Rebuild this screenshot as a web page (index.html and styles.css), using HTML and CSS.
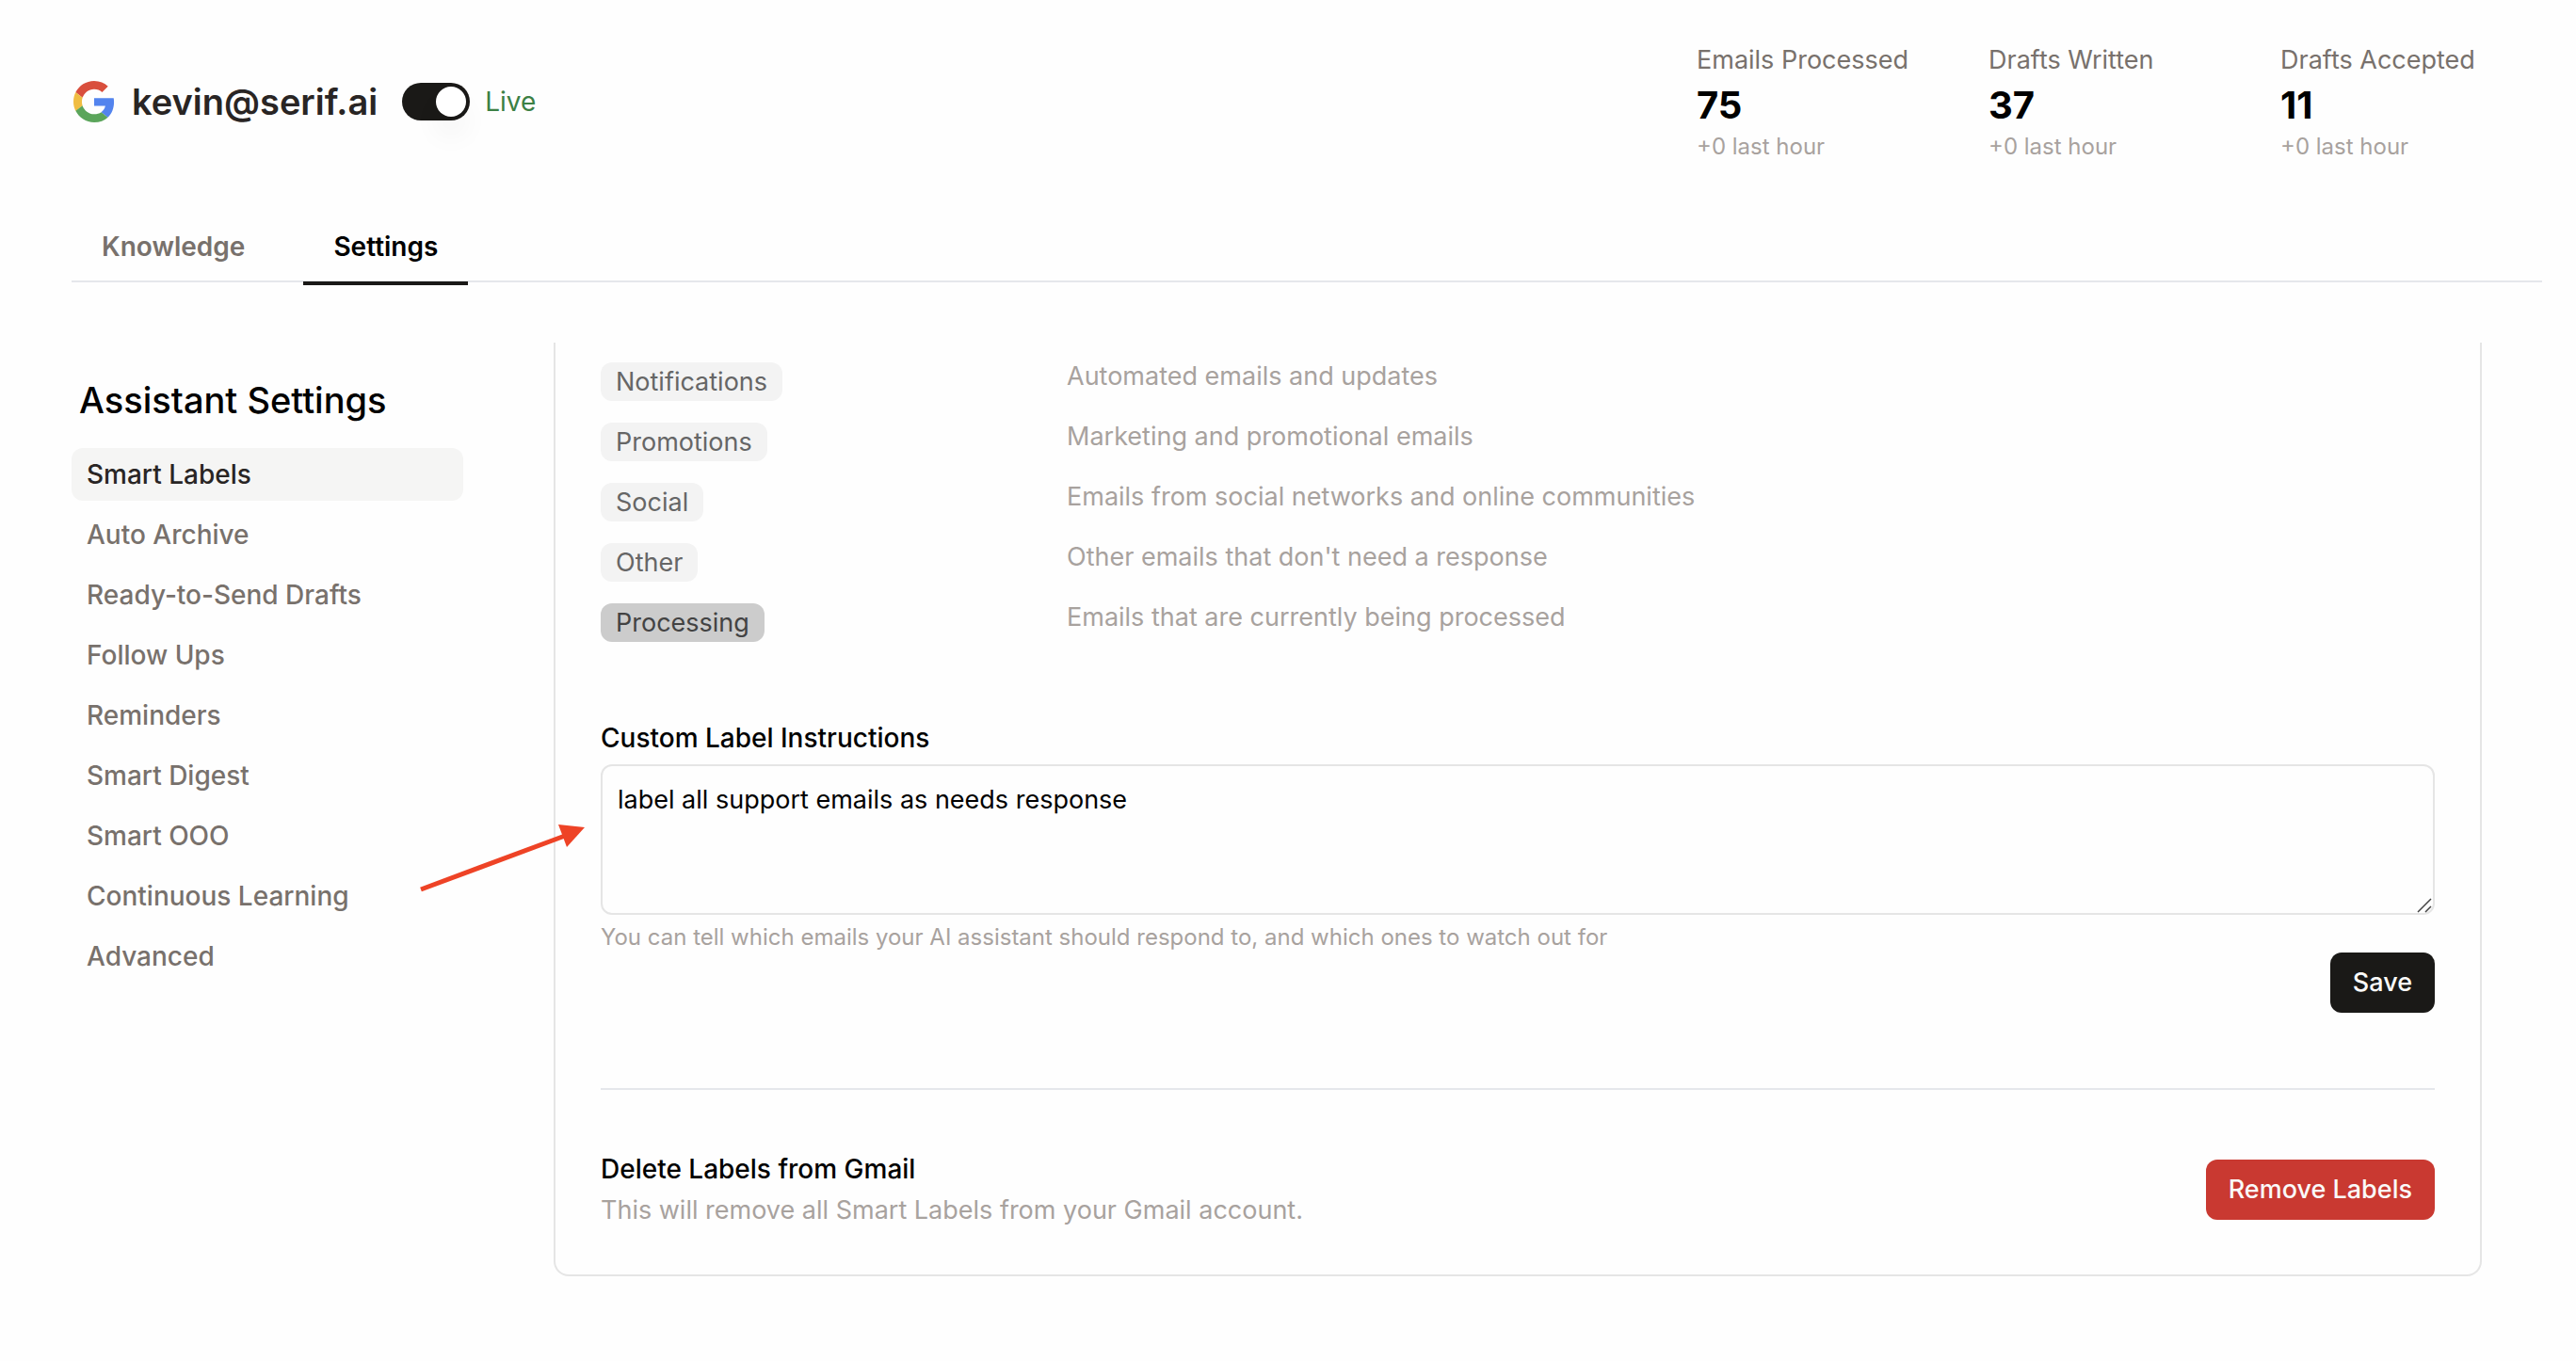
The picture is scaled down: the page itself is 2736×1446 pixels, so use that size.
FILE: index.html
```html
<!DOCTYPE html>
<html lang="en">
<head>
<meta charset="utf-8">
<meta name="viewport" content="width=device-width, initial-scale=1">
<title>Assistant Settings</title>
<link rel="stylesheet" href="styles.css">
</head>
<body>
<header class="header">
  <div class="account">
    <svg class="google" viewBox="0 0 48 48" preserveAspectRatio="none" aria-hidden="true">
      <path fill="#d94f3d" d="M24 9.500c3.540 0 6.710 1.220 9.210 3.600l6.850-6.850C35.900 2.380 30.470 0 24 0 14.620 0 6.510 5.380 2.560 13.220l7.980 6.190C12.430 13.720 17.740 9.500 24 9.500z"/>
      <path fill="#5384ee" d="M46.980 24.550c0-1.570-.15-3.090-.38-4.550H24v9.020h12.940c-.58 2.960-2.260 5.480-4.780 7.180l7.730 6c4.510-4.180 7.090-10.360 7.090-17.650z"/>
      <path fill="#f0bd42" d="M10.530 28.590c-.48-1.450-.76-2.990-.76-4.590s.27-3.140.76-4.590l-7.980-6.190C.920 16.460 0 20.120 0 24c0 3.880.92 7.540 2.560 10.780l7.970-6.190z"/>
      <path fill="#5ba55b" d="M24 48c6.480 0 11.930-2.130 15.890-5.810l-7.730-6c-2.150 1.450-4.920 2.300-8.160 2.300-6.260 0-11.570-4.220-13.470-9.910l-7.980 6.190C6.510 42.620 14.620 48 24 48z"/>
    </svg>
    <h1 class="email">kevin@serif.ai</h1>
    <label class="live">
      <input class="switch" type="checkbox" role="switch" checked>
      <span>Live</span>
    </label>
  </div>
  <dl class="stats">
    <div><dt>Emails Processed</dt><dd class="count">75</dd><dd class="delta">+0 last hour</dd></div>
    <div><dt>Drafts Written</dt><dd class="count">37</dd><dd class="delta">+0 last hour</dd></div>
    <div><dt>Drafts Accepted</dt><dd class="count">11</dd><dd class="delta">+0 last hour</dd></div>
  </dl>
</header>

<nav class="tabs" aria-label="Sections">
  <a class="tab" href="#knowledge">Knowledge</a>
  <a class="tab tab-active" href="#settings" aria-current="page">Settings</a>
</nav>

<div class="layout">
  <aside class="sidebar">
    <h2 class="sidebar-title">Assistant Settings</h2>
    <nav class="menu" aria-label="Assistant settings">
      <a class="menu-active" href="#smart-labels" aria-current="page">Smart Labels</a>
      <a href="#auto-archive">Auto Archive</a>
      <a href="#drafts">Ready-to-Send Drafts</a>
      <a href="#follow-ups">Follow Ups</a>
      <a href="#reminders">Reminders</a>
      <a href="#digest">Smart Digest</a>
      <a href="#ooo">Smart OOO</a>
      <a href="#learning">Continuous Learning</a>
      <a href="#advanced">Advanced</a>
    </nav>
  </aside>

  <main class="card">
    <dl class="labels">
      <div><dt><span class="chip">Notifications</span></dt><dd>Automated emails and updates</dd></div>
      <div><dt><span class="chip">Promotions</span></dt><dd>Marketing and promotional emails</dd></div>
      <div><dt><span class="chip">Social</span></dt><dd>Emails from social networks and online communities</dd></div>
      <div><dt><span class="chip">Other</span></dt><dd>Other emails that don't need a response</dd></div>
      <div><dt><span class="chip chip-dark">Processing</span></dt><dd>Emails that are currently being processed</dd></div>
    </dl>

    <form class="instructions">
      <label class="field-title" for="instructions">Custom Label Instructions</label>
      <div class="field">
        <textarea id="instructions" aria-describedby="instructions-help">label all support emails as needs response</textarea>
        <svg class="grip" viewBox="0 0 16 16" aria-hidden="true"><path d="M1 15 15 1M9 15l6-6"/></svg>
        <svg class="arrow" viewBox="0 0 184 80" aria-hidden="true">
          <path class="arrow-line" d="M7 73 160 16"/>
          <path class="arrow-head" d="M181 7 153 4l9 24z"/>
        </svg>
      </div>
      <p class="help" id="instructions-help">You can tell which emails your AI assistant should respond to, and which ones to watch out for</p>
      <button class="button" type="button">Save</button>
    </form>

    <section class="remove">
      <div class="remove-text">
        <h3 class="field-title">Delete Labels from Gmail</h3>
        <p>This will remove all Smart Labels from your Gmail account.</p>
      </div>
      <button class="button button-danger" type="button">Remove Labels</button>
    </section>
  </main>
</div>
</body>
</html>
```
FILE: styles.css
```css
* {
  box-sizing: border-box;
}

body {
  margin: 0;
  padding: 44px 36px 48px 76px;
  background: #fefefe;
  color: #000;
  font: 400 27px/40px Inter, "Liberation Sans", sans-serif;
}

h1, h2, h3, p, dl, dd {
  margin: 0;
}

a {
  color: inherit;
  text-decoration: none;
}

button, textarea {
  font: inherit;
}

/* Header */
.header {
  display: flex;
  align-items: center;
  justify-content: space-between;
  padding-right: 48px;
}

.account {
  display: flex;
  align-items: center;
}

.google {
  width: 44px;
  height: 44px;
  margin: 0 18px 0 2px;
}

.email {
  color: #292524;
  font-size: 38px;
  font-weight: 600;
  line-height: 56px;
}

.live {
  display: flex;
  align-items: center;
  gap: 16px;
  margin-left: 26px;
  color: #3b8044;
  font-size: 28px;
}

.switch {
  appearance: none;
  display: flex;
  width: 72px;
  height: 40px;
  margin: 0;
  padding: 4px;
  border-radius: 20px;
  background: #1a1917;
}

.switch::before {
  content: "";
  width: 32px;
  height: 32px;
  margin-left: auto;
  border-radius: 50%;
  background: #fff;
  box-shadow: 0 20px 30px rgb(0 0 0 / 5%);
}

.stats {
  display: grid;
  grid-template-columns: repeat(3, 230px);
  gap: 80px;
}

.stats dt {
  color: #78716c;
  white-space: nowrap;
}

.count {
  font-size: 40px;
  font-weight: 700;
  line-height: 56px;
}

.delta {
  color: #a8a29e;
  font-size: 24px;
  line-height: 32px;
}

/* Tabs */
.tabs {
  display: flex;
  gap: 30px;
  margin-top: 52px;
  border-bottom: 2px solid #e5e7eb;
}

.tab {
  margin-bottom: -5px;
  padding: 18px 32px 17px;
  border-bottom: 4px solid transparent;
  color: #78716c;
  font-size: 28px;
  font-weight: 600;
}

.tab-active {
  border-color: #1a1917;
  color: #000;
}

/* Columns */
.layout {
  display: grid;
  grid-template-columns: 416px 1fr;
  gap: 96px;
  align-items: start;
  margin-top: 64px;
  padding-right: 64px;
}

.sidebar {
  padding-top: 32px;
}

.sidebar-title {
  padding-left: 8px;
  font-size: 38px;
  font-weight: 500;
  line-height: 58px;
}

.menu {
  display: grid;
  gap: 8px;
  margin-top: 22px;
}

.menu a {
  padding: 8px 16px;
  border-radius: 12px;
  color: #78716c;
  font-size: 28px;
  font-weight: 500;
}

.menu .menu-active {
  background: #f5f5f4;
  color: #292524;
}

.card {
  padding: 16px 48px 48px;
  border: 2px solid #e5e5e5;
  border-top: 0;
  border-radius: 0 0 16px 16px;
}

.labels {
  display: grid;
  gap: 24px;
}

.labels div {
  display: grid;
  grid-template-columns: 495px 1fr;
  height: 40px;
}

.labels dt {
  padding-top: 5px;
}

.labels dd {
  color: #a8a29e;
}

.chip {
  display: block;
  width: fit-content;
  padding: 1px 16px 0;
  border-radius: 12px;
  background: #f3f3f3;
  color: #666;
}

.chip-dark {
  background: #ccc;
  color: #434343;
}

/* Custom instructions */
.instructions {
  display: flex;
  flex-direction: column;
  margin-top: 88px;
  padding-bottom: 80px;
  border-bottom: 2px solid #e5e7eb;
}

.field-title {
  font-size: 28px;
  font-weight: 500;
}

.field {
  position: relative;
  margin: 8px 0;
}

.field textarea {
  display: block;
  width: 100%;
  height: 160px;
  padding: 16px;
  border: 2px solid #e5e5e5;
  border-radius: 12px;
  background: transparent;
  color: #000;
  line-height: 40px;
  resize: none;
}

.grip {
  position: absolute;
  right: 3px;
  bottom: 2px;
  width: 16px;
  height: 16px;
  fill: none;
  stroke: #444;
  stroke-width: 1.500;
}

.arrow {
  position: absolute;
  top: 60px;
  left: -198px;
  width: 184px;
  height: 80px;
}

.arrow-line {
  fill: none;
  stroke: #ee4326;
  stroke-width: 5;
}

.arrow-head {
  fill: #ee4326;
}

.help {
  color: #a8a29e;
  font-size: 24px;
  line-height: 32px;
}

.button {
  flex: none;
  align-self: flex-end;
  padding: 12px 24px;
  border: 0;
  border-radius: 12px;
  background: #1a1917;
  color: #fafaf9;
  font-weight: 500;
}

.button-danger {
  align-self: center;
  background: #c93931;
}

/* Label removal */
.remove {
  display: flex;
  justify-content: space-between;
  margin-top: 64px;
}

.remove-text {
  display: grid;
  gap: 4px;
}

.remove-text p {
  color: #a8a29e;
}
```
